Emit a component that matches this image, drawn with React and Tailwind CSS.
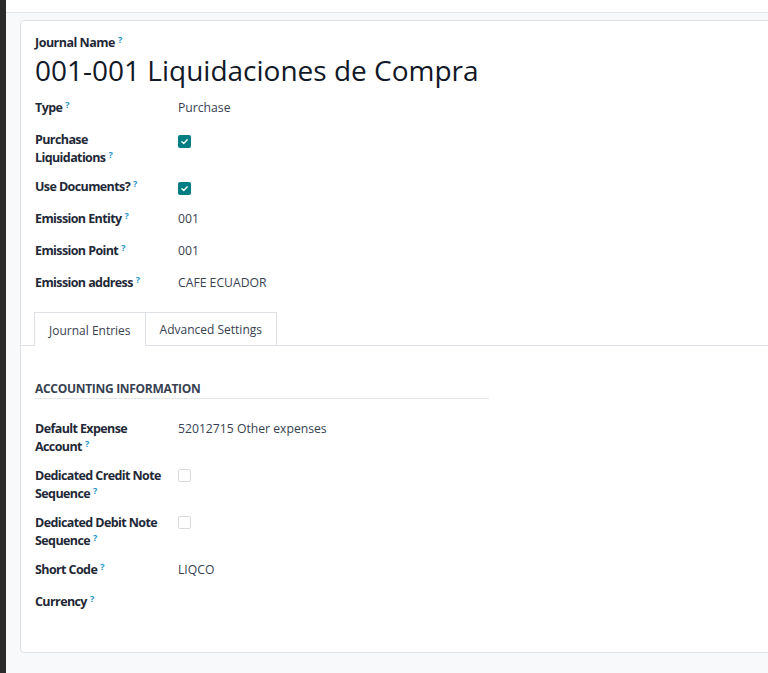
import React from "react";

const Q = () => (
  <span className="ml-[3px] inline-block align-top text-[9px] font-bold leading-[12px] tracking-normal text-[#1a95c9]">?</span>
);

function L({ text }) {
  const i = text.lastIndexOf(" ");
  const rest = i >= 0 ? text.slice(0, i + 1) : "";
  const last = i >= 0 ? text.slice(i + 1) : text;
  return (
    <>
      {rest}
      <span className="whitespace-nowrap">
        {last}
        <Q />
      </span>
    </>
  );
}

function Check({ checked }) {
  if (checked) {
    return (
      <span className="inline-flex h-[13px] w-[13px] items-center justify-center rounded-[2px] bg-[#017e84]">
        <svg viewBox="0 0 12 12" className="h-[9px] w-[9px]">
          <path d="M2.5 6.3 L5 8.6 L9.6 3.6" fill="none" stroke="white" strokeWidth="1.8" strokeLinecap="round" strokeLinejoin="round" />
        </svg>
      </span>
    );
  }
  return <span className="inline-block h-[13px] w-[13px] rounded-[2px] border border-[#d8dadd] bg-white" />;
}

function Row({ label, children }) {
  return (
    <div className="mb-[11px] flex min-h-[21px]">
      <div className="w-[143px] shrink-0 pr-[13px] text-[12.5px] font-bold leading-[18px] tracking-[-0.6px] text-[#1f2937]">
        <L text={label} />
      </div>
      <div className="flex-1 text-[12.2px] leading-[18px] text-[#374151]">{children}</div>
    </div>
  );
}

export default function App() {
  return (
    <div
      className="flex h-[673px] w-[768px] overflow-hidden"
      style={{ fontFamily: '"Open Sans", "Noto Sans", sans-serif' }}
    >
      <div className="w-[6px] shrink-0 bg-[#2b2b2b]" />
      <div className="flex min-w-0 flex-1 flex-col bg-[#f8f9fa]">
        <div className="h-[13px] shrink-0 border-b border-[#e3e5e8] bg-white" />
        <div className="pl-[14px] pt-[7px]">
          <div className="mr-[-12px] h-[633px] rounded-[4px] border border-[#dee2e6] bg-white pt-[13px]">
            <div className="px-[14px]">
              <div className="text-[12.5px] font-bold leading-[18px] tracking-[-0.5px] text-[#1f2937]">
                Journal Name<Q />
              </div>
              <div className="mt-[2px] text-[28px] leading-[32px] text-[#111827]">
                001-001 Liquidaciones de Compra
              </div>
              <div className="mt-[13px]">
                <Row label="Type">Purchase</Row>
                <Row label="Purchase Liquidations">
                  <div className="pt-[2px]"><Check checked /></div>
                </Row>
                <Row label="Use Documents?">
                  <div className="pt-[2px]"><Check checked /></div>
                </Row>
                <Row label="Emission Entity">001</Row>
                <Row label="Emission Point">001</Row>
                <Row label="Emission address">CAFE ECUADOR</Row>
              </div>
            </div>
            {/* tabs */}
            <div className="mt-[17px] flex border-b border-[#dee2e6] pl-[13px]">
              <div className="mb-[-1px] flex h-[34px] items-center border border-b-0 border-[#dee2e6] bg-white px-[14px] pt-[2px] text-[12px] text-[#374151]">
                Journal Entries
              </div>
              <div className="flex h-[33px] items-center border border-b-0 border-l-0 border-[#dee2e6] px-[14px] pt-[2px] text-[12px] text-[#374151]">
                Advanced Settings
              </div>
            </div>
            <div className="px-[14px] pt-[34px]">
              <div className="w-[454px] border-b border-[#e5e7eb] text-[12px] font-bold uppercase leading-[18px] tracking-[-0.3px] text-[#374151]">
                Accounting Information
              </div>
              <div className="mt-[21px]">
                <Row label="Default Expense Account">52012715 Other expenses</Row>
                <Row label="Dedicated Credit Note Sequence">
                  <div className="pt-[2px]"><Check /></div>
                </Row>
                <Row label="Dedicated Debit Note Sequence">
                  <div className="pt-[2px]"><Check /></div>
                </Row>
                <Row label="Short Code">LIQCO</Row>
                <Row label="Currency"></Row>
              </div>
            </div>
          </div>
        </div>
      </div>
    </div>
  );
}
